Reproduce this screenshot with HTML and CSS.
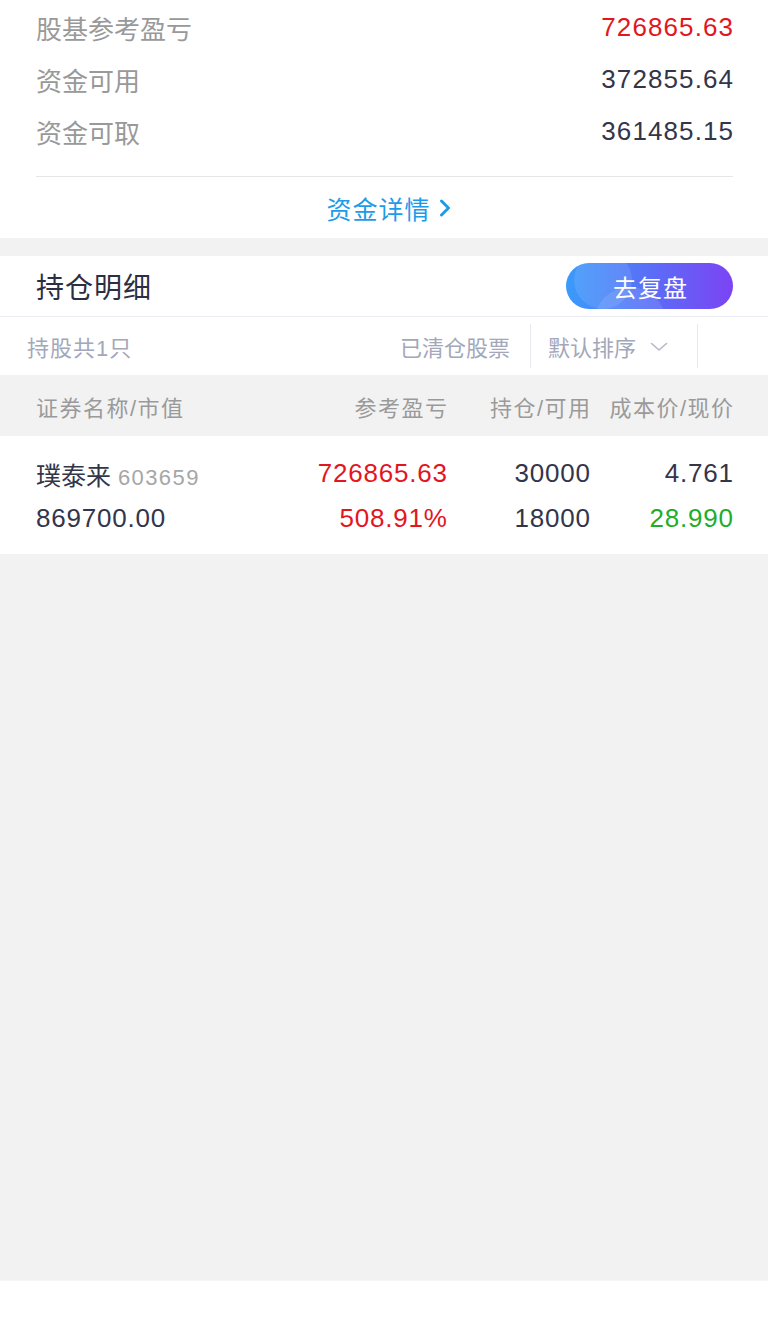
FILE: index.html
```html
<!DOCTYPE html>
<html lang="zh-CN">
<head>
<meta charset="utf-8">
<title>持仓</title>
<link rel="stylesheet" href="styles.css">
</head>
<body>
<div class="page">
  <section class="summary">
    <div class="sum-row"><span class="sum-label">股基参考盈亏</span><span class="sum-val red">726865.63</span></div>
    <div class="sum-row"><span class="sum-label">资金可用</span><span class="sum-val">372855.64</span></div>
    <div class="sum-row"><span class="sum-label">资金可取</span><span class="sum-val">361485.15</span></div>
    <div class="sum-link">
      <span>资金详情</span>
      <svg class="link-chev" width="12" height="18" viewBox="0 0 12 18"><path d="M2.5 2 L9.5 9 L2.5 16" fill="none" stroke="#1e9be8" stroke-width="3" stroke-linecap="round" stroke-linejoin="round"/></svg>
    </div>
  </section>

  <section class="positions">
    <div class="pos-head">
      <span class="pos-title">持仓明细</span>
      <div class="review-btn">
        <span class="bubble b1"></span>
        <span class="bubble b2"></span>
        <span class="review-text">去复盘</span>
      </div>
    </div>
    <div class="filter-row">
      <span class="filter-count">持股共1只</span>
      <span class="filter-cleared">已清仓股票</span>
      <span class="vdiv"></span>
      <span class="filter-sort">默认排序
        <svg class="sort-chev" width="18" height="10" viewBox="0 0 18 10"><path d="M1.5 1.5 L9 8 L16.5 1.5" fill="none" stroke="#b4b8c8" stroke-width="1.6" stroke-linecap="round" stroke-linejoin="round"/></svg>
      </span>
      <span class="vdiv"></span>
      <span class="filter-space"></span>
    </div>
    <div class="col-head">
      <span>证券名称/市值</span>
      <span class="r">参考盈亏</span>
      <span class="r">持仓/可用</span>
      <span class="r">成本价/现价</span>
    </div>
    <div class="stock">
      <div class="stock-line">
        <span class="stock-name">璞泰来 <span class="stock-code">603659</span></span>
        <span class="r red">726865.63</span>
        <span class="r">30000</span>
        <span class="r">4.761</span>
      </div>
      <div class="stock-line">
        <span class="num">869700.00</span>
        <span class="r red">508.91%</span>
        <span class="r">18000</span>
        <span class="r green">28.990</span>
      </div>
    </div>
  </section>
  <div class="filler"></div>
  <div class="bottom-bar"></div>
</div>
</body>
</html>
```

FILE: styles.css
```css
* { box-sizing: border-box; }
html, body { margin: 0; padding: 0; }
body {
  background: #ffffff;
  font-family: "Liberation Sans", "Noto Sans CJK SC", sans-serif;
  color: #33354a;
}
.page {
  width: 768px;
  height: 1339px;
  display: flex;
  flex-direction: column;
  background: #f2f2f2;
}

.summary {
  background: #fff;
  padding: 1px 35px 0 36px;
  margin-bottom: 18px;
}
.sum-row {
  height: 52px;
  display: flex;
  align-items: center;
  justify-content: space-between;
  font-size: 26px;
}
.sum-label { color: #999999; }
.sum-val {
  color: #33354a;
  letter-spacing: 1.1px;
  margin-right: -1.1px;
}
.sum-row:nth-child(3) { margin-bottom: 19px; }
.sum-link {
  height: 62px;
  border-top: 1px solid #e6e6e6;
  display: flex;
  align-items: center;
  justify-content: center;
  gap: 8px;
  color: #1e9be8;
  font-size: 25px;
  letter-spacing: 1px;
  padding-left: 8px;
}
.link-chev { margin-top: 1px; }

.positions { background: #fff; }
.pos-head {
  height: 61px;
  display: flex;
  align-items: center;
  justify-content: space-between;
  padding: 0 35px 0 36px;
  border-bottom: 1px solid #ebebf2;
}
.pos-title {
  font-size: 28px;
  color: #2c2e44;
  letter-spacing: 1px;
}
.review-btn {
  position: relative;
  width: 167px;
  height: 46px;
  border-radius: 23px;
  overflow: hidden;
  background: linear-gradient(90deg, #3a9bfb 0%, #5a6ef7 50%, #7c43f4 100%);
  display: flex;
  align-items: center;
  justify-content: center;
}
.bubble {
  position: absolute;
  border-radius: 50%;
  background: rgba(255, 255, 255, 0.1);
}
.b1 { width: 58px; height: 58px; left: 8px; top: -12px; }
.b2 { width: 72px; height: 72px; left: 28px; top: 24px; }
.review-text {
  position: relative;
  color: #fff;
  font-size: 24px;
  letter-spacing: 1px;
  padding-left: 2px;
}

.filter-row {
  height: 58px;
  display: flex;
  align-items: center;
  font-size: 22px;
  color: #a3a7ba;
}
.filter-count { flex: 1; padding-left: 27px; letter-spacing: 1px; }
.filter-cleared { padding-right: 20px; }
.vdiv { width: 1px; height: 44px; background: #e8e8ee; }
.filter-sort {
  width: 166px;
  padding-left: 17px;
  display: flex;
  align-items: center;
}
.sort-chev { margin-left: 14px; margin-top: 2px; }
.filter-space { width: 70px; }

.col-head {
  height: 61px;
  background: #f2f2f2;
  display: grid;
  grid-template-columns: 1fr 150px 143px 143px;
  align-items: center;
  padding: 0 35px 0 36px;
  font-size: 22px;
  color: #9a9a9a;
  letter-spacing: 1.5px;
}
.col-head .r { margin-right: -1.5px; }
.r { text-align: right; }

.stock {
  height: 118px;
  padding: 15px 35px 0 36px;
  background: #fff;
}
.stock-line {
  height: 45px;
  display: grid;
  grid-template-columns: 1fr 150px 143px 143px;
  align-items: center;
  font-size: 26px;
  color: #33354a;
}
.stock-line .r, .stock-line .num {
  letter-spacing: 0.8px;
}
.stock-line .r { margin-right: -0.8px; }
.stock-name { font-size: 25px; }
.stock-code { font-size: 22px; color: #a6a6a6; letter-spacing: 1.4px; }

.red { color: #e3161e; }
.green { color: #1eae2a; }

.filler { flex: 1; }
.bottom-bar {
  height: 59px;
  background: #fff;
  border-top: 1px solid #f6f6f6;
}
```
